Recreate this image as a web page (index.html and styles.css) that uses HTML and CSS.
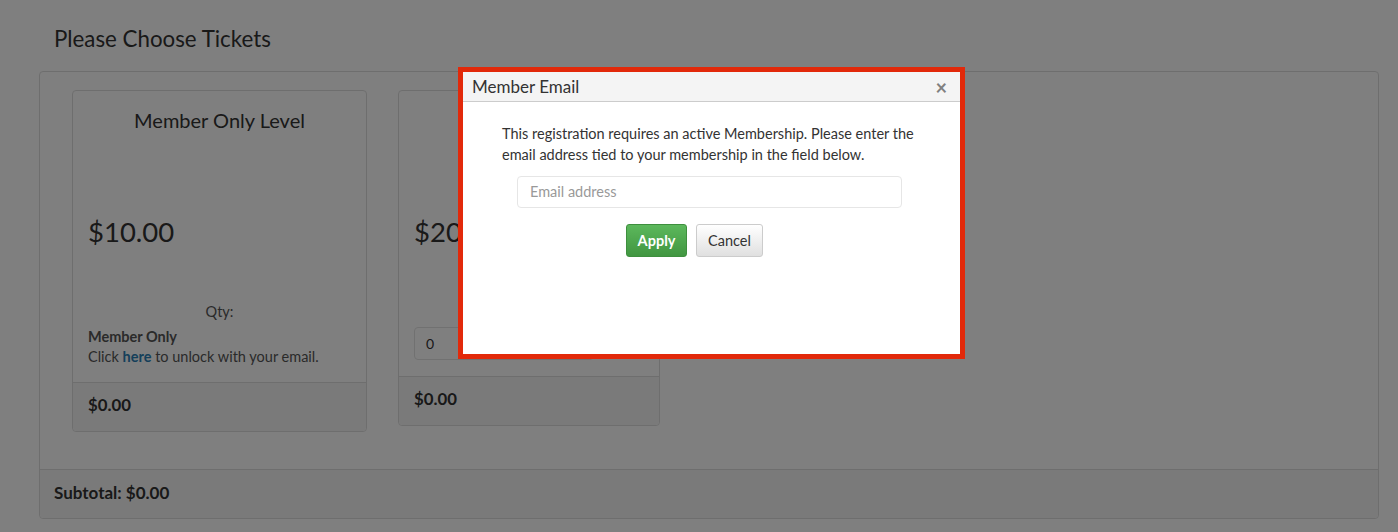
FILE: index.html
```html
<!DOCTYPE html>
<html lang="en">
<head>
<meta charset="utf-8">
<title>Please Choose Tickets</title>
<link rel="stylesheet" href="styles.css">
</head>
<body>
<div class="page">
  <h2 class="heading">Please Choose Tickets</h2>
  <div class="panel">
    <div class="cards">
      <div class="card card-a">
        <div class="card-body">
          <div class="card-title">Member Only Level</div>
          <div class="price">$10.00</div>
          <div class="qty">Qty:</div>
          <div class="member-note">
            <strong>Member Only</strong><br>
            Click <a href="#" class="link">here</a> to unlock with your email.
          </div>
        </div>
        <div class="card-footer">$0.00</div>
      </div>
      <div class="card card-b">
        <div class="card-body">
          <div class="card-title"></div>
          <div class="price">$20.00</div>
          <div class="qty-row">
            <div class="qty-input">0</div>
          </div>
        </div>
        <div class="card-footer">$0.00</div>
      </div>
    </div>
    <div class="panel-footer">Subtotal: $0.00</div>
  </div>
</div>

<div class="overlay"></div>

<div class="modal">
  <div class="modal-inner">
    <div class="modal-header">
      <span class="modal-title">Member Email</span>
      <span class="modal-close">&times;</span>
    </div>
    <div class="modal-body">
      <p class="modal-text">This registration requires an active Membership. Please enter the email address tied to your membership in the field below.</p>
      <div class="email-input">Email address</div>
      <div class="modal-actions">
        <button class="btn btn-apply">Apply</button>
        <button class="btn btn-cancel">Cancel</button>
      </div>
    </div>
  </div>
</div>
</body>
</html>
```
FILE: styles.css
```css
* { box-sizing: border-box; }
html, body { margin: 0; padding: 0; }
body {
  background: #ffffff;
  font-family: "Lato", "Open Sans", "DejaVu Sans", sans-serif;
  color: #333333;
  width: 1398px;
  height: 532px;
  overflow: hidden;
}
.page {
  padding: 0 19px 0 39px;
}
.heading {
  margin: 0;
  padding: 27px 0 0 15px;
  font-size: 22.3px;
  font-weight: 400;
  line-height: 24px;
  height: 71px;
  color: #333;
}
.panel {
  border: 1px solid #dddddd;
  border-radius: 4px;
  background: #ffffff;
}
.cards {
  display: flex;
  align-items: flex-start;
  gap: 31px;
  padding: 18px 0 37px 32px;
}
.card {
  border: 1px solid #dddddd;
  border-radius: 4px;
  background: #fff;
  display: flex;
  flex-direction: column;
}
.card-a { width: 295px; }
.card-b { width: 262px; }
.card-body {
  padding: 16px 15px 15px 15px;
}
.card-title {
  text-align: center;
  font-size: 20px;
  line-height: 26px;
  height: 26px;
  color: #333;
}
.price {
  margin-top: 82px;
  font-size: 27.5px;
  line-height: 34px;
  color: #333;
}
.qty {
  margin-top: 53px;
  text-align: center;
  font-size: 14.5px;
  line-height: 20px;
  color: #555;
}
.member-note {
  margin-top: 5px;
  font-size: 14.5px;
  line-height: 20px;
  color: #555;
}
.member-note strong { color: #555; }
.link {
  color: #2a7fb4;
  text-decoration: none;
  font-weight: 700;
}
.card-b .card-body {
  padding: 16px 15px 16px 15px;
}
.qty-row {
  margin-top: 78px;
  display: flex;
  align-items: center;
}
.qty-input {
  width: 180px;
  height: 33px;
  border: 1px solid #e2e2e2;
  border-radius: 4px;
  padding: 0 11px;
  font-size: 14px;
  line-height: 31px;
  color: #333;
}
.card-footer {
  border-top: 1px solid #dddddd;
  background: #f5f5f5;
  padding: 11px 15px 15px 15px;
  font-size: 16.8px;
  font-weight: 700;
  line-height: 22px;
  color: #333;
  border-radius: 0 0 4px 4px;
}
.card-b .card-footer {
  padding: 11px 15px 15px 15px;
}
.panel-footer {
  border-top: 1px solid #dddddd;
  background: #f5f5f5;
  padding: 12px 14px 14px 14px;
  font-size: 17px;
  font-weight: 700;
  line-height: 22px;
  color: #333;
  border-radius: 0 0 4px 4px;
}
.overlay {
  position: fixed;
  inset: 0;
  background: rgba(0, 0, 0, 0.5);
}
.modal {
  position: absolute;
  left: 458px;
  top: 67px;
  width: 507px;
  height: 292px;
  border: 5px solid #e2290a;
  background: #ffffff;
}
.modal-inner {
  height: 100%;
  display: flex;
  flex-direction: column;
}
.modal-header {
  display: flex;
  justify-content: space-between;
  align-items: center;
  height: 30px;
  padding: 0 13px 0 9px;
  background: #f4f4f4;
  border-bottom: 1px solid #cccccc;
}
.modal-title {
  font-size: 17px;
  color: #333;
}
.modal-close {
  font-size: 20px;
  font-weight: 700;
  color: #808080;
  line-height: 20px;
}
.modal-body {
  padding: 21px 30px 0 39px;
}
.modal-text {
  margin: 0;
  font-size: 14.5px;
  line-height: 21px;
  color: #333;
}
.email-input {
  margin: 11px 0 0 15px;
  width: 385px;
  height: 32px;
  border: 1px solid #e6e6e6;
  border-radius: 4px;
  padding: 0 12px;
  font-size: 14.5px;
  line-height: 30px;
  color: #999;
}
.modal-actions {
  margin: 16px 0 0 124px;
  display: flex;
  gap: 9px;
}
.btn {
  height: 33px;
  border-radius: 3px;
  font-family: inherit;
  font-size: 14.5px;
  padding: 0;
  cursor: pointer;
}
.btn-apply {
  width: 61px;
  background: linear-gradient(#5cb85c, #419641);
  border: 1px solid #3e8f3e;
  color: #ffffff;
  font-weight: 700;
}
.btn-cancel {
  width: 67px;
  background: linear-gradient(#ffffff, #e0e0e0);
  border: 1px solid #cccccc;
  color: #333;
}
```
